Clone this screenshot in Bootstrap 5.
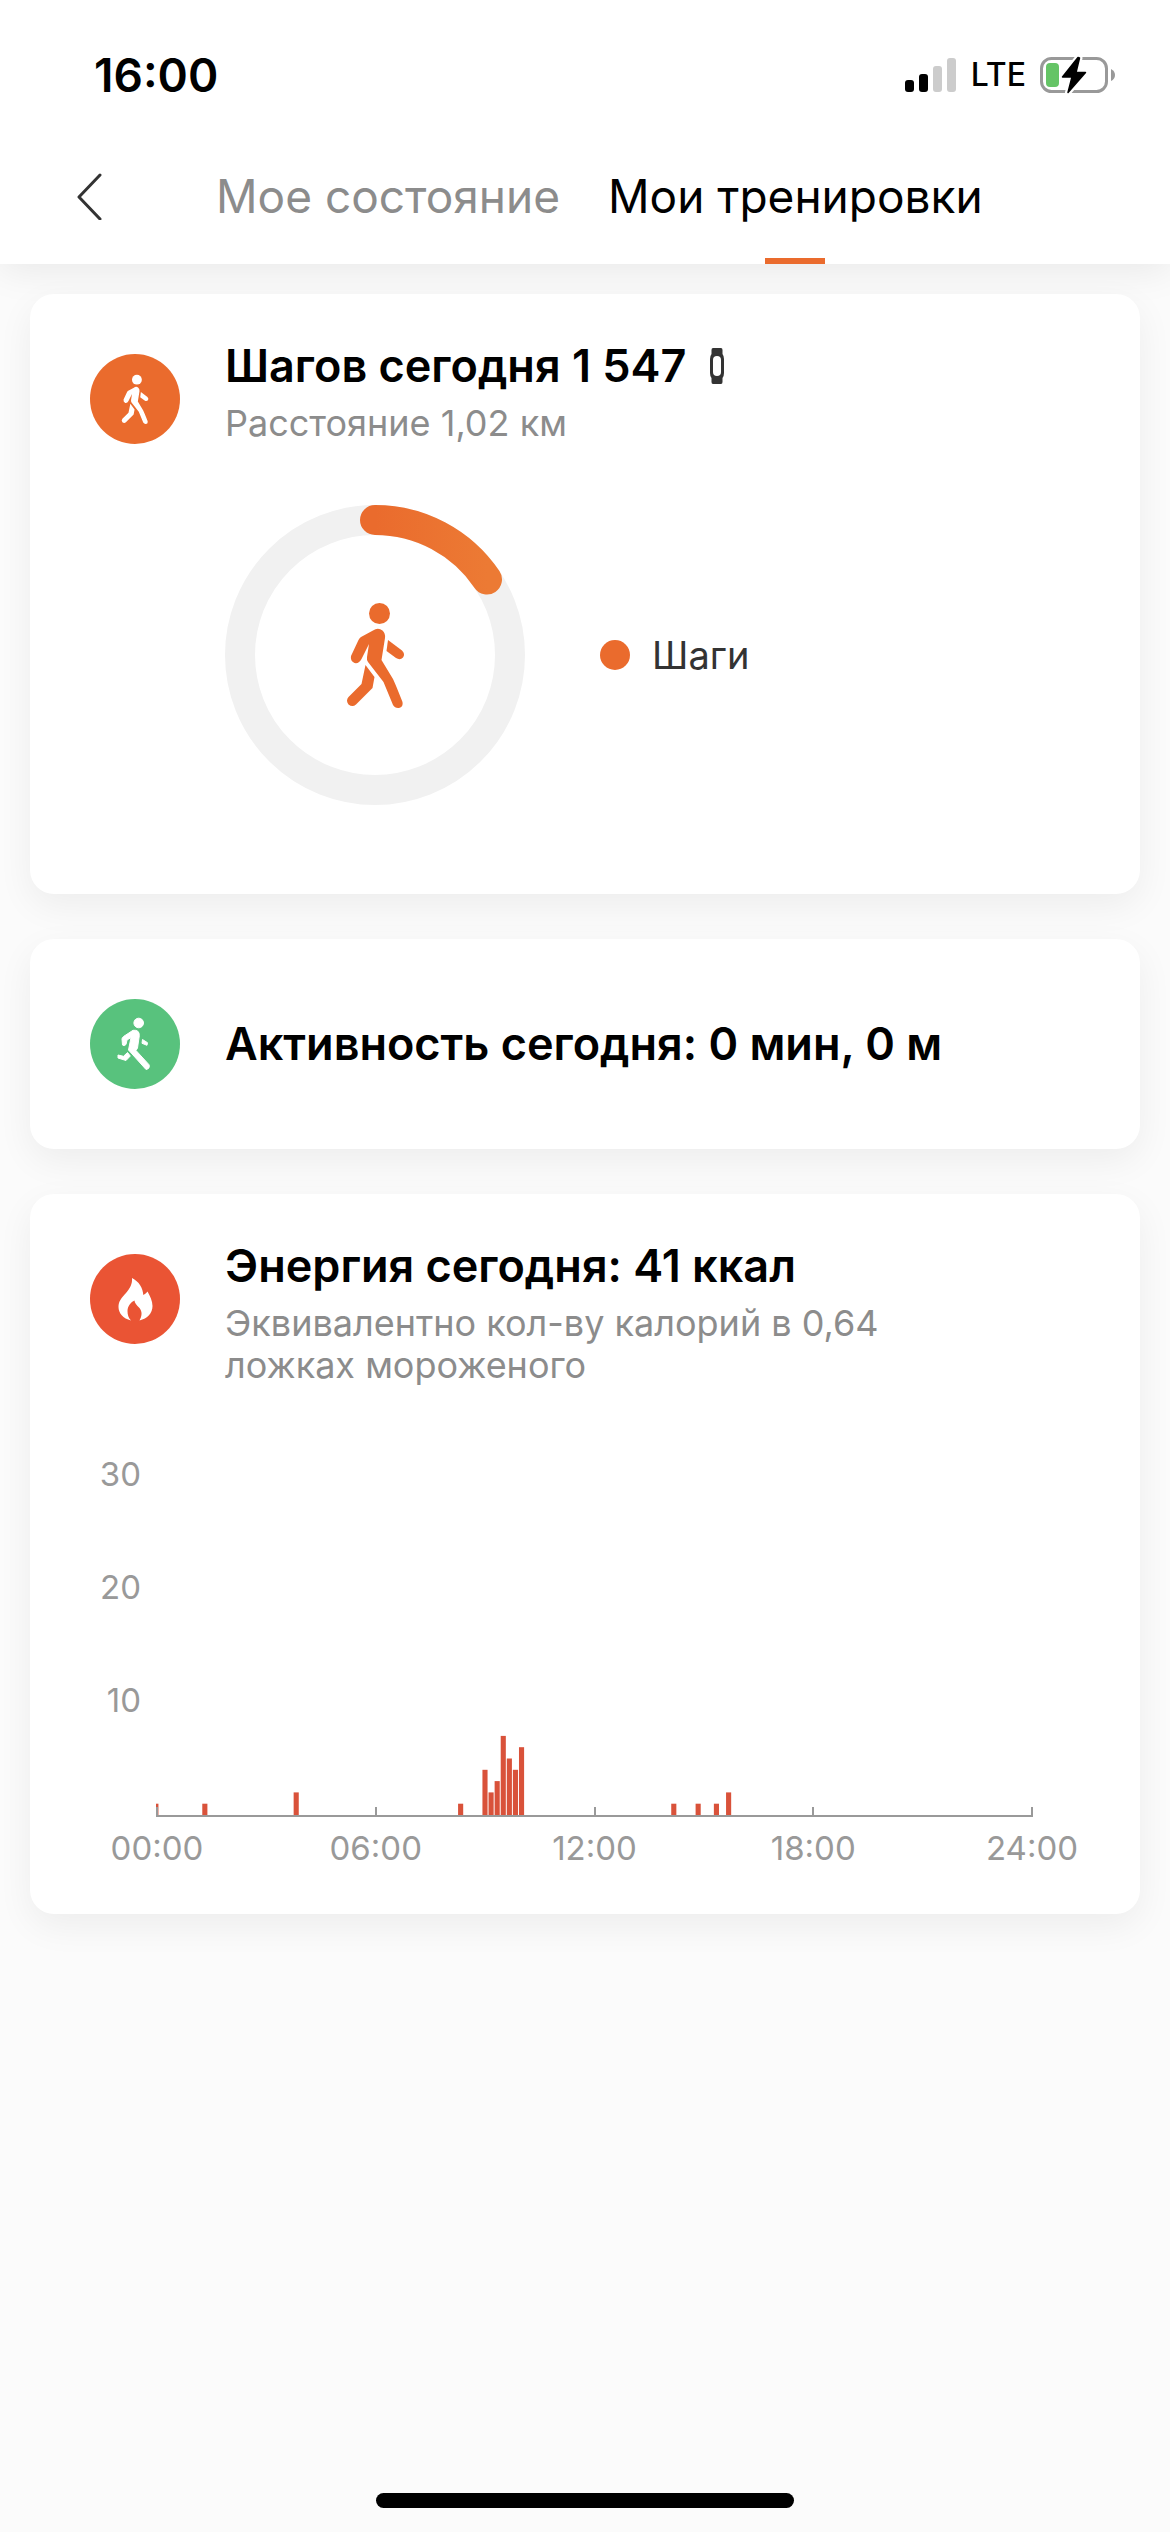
<!DOCTYPE html>
<html lang="ru">
<head>
<meta charset="utf-8">
<meta name="viewport" content="width=device-width, initial-scale=1">
<title>Мои тренировки</title>
<link href="https://cdn.jsdelivr.net/npm/bootstrap@5.3.0/dist/css/bootstrap.min.css" rel="stylesheet">
<style>
  :root { --accent: #ea6b2d; --muted: #8c8c8c; }
  body { font-family: Inter, "Noto Sans", sans-serif; background: #fbfbfb; color: #000; }
  .top-area { background: #fff; box-shadow: 0 6px 36px rgba(0,0,0,.08); }
  .status-bar { height: 150px; padding: 0 54px 0 94px; }
  .status-icons { gap: 14px; }
  .clock { font-size: 46px; font-weight: 600; line-height: 54px; }
  .net-type { font-size: 32px; font-weight: 500; line-height: 42px; }
  .nav-row { height: 114px; padding-left: 60px; }
  .back-btn { width: 60px; height: 60px; }
  .tabs-list { gap: 48px; margin-left: 96px; font-size: 46px; line-height: 60px; }
  .tab-link { height: 114px; padding-top: 16px; color: var(--muted); text-decoration: none; white-space: nowrap; }
  .tab-link.active { color: #000; }
  .tab-link.active::after { content: ""; width: 60px; height: 6px; margin-top: auto; background: var(--accent); }
  .feed { padding: 30px; gap: 45px; }
  .panel { border: 0; border-radius: 24px; box-shadow: 0 12px 36px rgba(0,0,0,.06); }
  .panel-head { padding: 45px 60px 0; gap: 45px; }
  .panel-single { padding: 60px; }
  .round-icon { width: 90px; height: 90px; }
  .head-offset { margin-top: 15px; }
  .panel-title { font-size: 45px; font-weight: 600; line-height: 54px; margin: 0; }
  .panel-sub { font-size: 36px; line-height: 42px; color: var(--muted); margin: 9px 0 0; max-width: 700px; }
  .steps-body { padding: 61px 60px 89px 195px; gap: 75px; }
  .ring { width: 300px; height: 300px; }
  .legend-dot { width: 30px; height: 30px; background: var(--accent); }
  .legend { gap: 22px; font-size: 38px; line-height: 48px; color: #333; }
  .chart { padding: 67px 107px 45px 60px; font-size: 33px; line-height: 42px; color: #999; }
  .y-scale { width: 51px; }
  .y-scale span { height: 113px; }
  .plot { flex: 1 1 0; min-width: 0; height: 364px; margin-left: 15px; padding-top: 23px; border-bottom: 2px solid #999; }
  .plot svg { height: 339px; }
  .ticks { height: 8px; margin-top: -8px; }
  .ticks i { width: 2px; background: #999; }
  .x-scale { margin: 10px 0 0 66px; }
  .x-scale span { width: 2px; }
  .home-bar { width: 418px; height: 15px; margin-bottom: 24px; }
</style>
</head>
<body>
<svg class="d-none" aria-hidden="true">
  <symbol id="walker" viewBox="0 0 110 140">
    <circle cx="59.500" cy="33.500" r="10.500"/>
    <path d="M41 57 L53 50.500 Q58 47 62.500 50.500 Q65.500 53 65 58 L61.500 80 L73 99 Q75 103 82.500 122 Q83.500 127 79 128 Q75 128.500 73 125 L63.500 102 L48 82 Q46.500 80 47 77 L49 64 L41.500 79 Q39 84 34.500 83 Q30 81 31 76 L38.500 60 Q39.500 58 41 57 Z"/>
    <path d="M68 60 L82 70.500 Q85.500 74 83 77.500 Q80 80.500 76 78 L66.500 71 Z"/>
    <path d="M45.500 85 L54.500 97 L52.500 108 L36 124.500 Q32.500 127.500 28.500 124.500 Q25.500 120.500 28.500 117 L41.500 104 Z"/>
  </symbol>
</svg>
<div class="min-vh-100 d-flex flex-column">
  <header class="top-area">
    <div class="status-bar d-flex align-items-center justify-content-between">
      <span class="clock">16:00</span>
      <div class="status-icons d-flex align-items-center">
        <svg width="52" height="36" viewBox="0 0 52 36" role="img" aria-label="Сигнал">
          <rect x="0" y="23" width="9" height="12" rx="3"/><rect x="14" y="17" width="9" height="18" rx="3"/>
          <rect x="28" y="9" width="9" height="26" rx="3" fill="#ccc"/><rect x="42" y="1" width="9" height="34" rx="3" fill="#ccc"/>
        </svg>
        <span class="net-type">LTE</span>
        <svg width="76" height="40" viewBox="0 0 76 40" role="img" aria-label="Батарея">
          <rect x="1.500" y="3.500" width="65" height="33" rx="10" fill="none" stroke="#999" stroke-width="3"/>
          <rect x="6" y="8" width="13" height="24" rx="4" fill="#65c466"/>
          <path d="M71 14 Q75 16 75 20 Q75 24 71 26 Z" fill="#999"/>
          <path d="M38 2.500 L22.500 22 H32 L28 37.500 L45.500 17.500 H36 L39.500 3 Z" stroke="#fff" stroke-width="6" stroke-linejoin="round"/>
          <path d="M38 2.500 L22.500 22 H32 L28 37.500 L45.500 17.500 H36 L39.500 3 Z" stroke="#000" stroke-width="1.500" stroke-linejoin="round"/>
        </svg>
      </div>
    </div>
    <nav class="nav-row d-flex">
      <button type="button" class="back-btn btn p-0 border-0 mt-3 d-flex align-items-center justify-content-center" aria-label="Назад">
        <svg width="28" height="48" viewBox="0 0 28 48" fill="none" stroke="#333" stroke-width="3" stroke-linecap="round" stroke-linejoin="round"><path d="M24 3 L3 25 L24 47"/></svg>
      </button>
      <div class="tabs-list d-flex">
        <a href="#" class="tab-link d-flex flex-column align-items-center">Мое состояние</a>
        <a href="#" class="tab-link active d-flex flex-column align-items-center" aria-current="page">Мои тренировки</a>
      </div>
    </nav>
  </header>

  <main class="feed d-flex flex-column">
    <section class="panel card">
      <div class="panel-head d-flex">
        <svg class="round-icon head-offset flex-shrink-0" viewBox="0 0 90 90"><circle cx="45" cy="45" r="45" fill="#ea6b2d"/><use href="#walker" x="19" y="10" width="51.600" height="65.600" fill="#fff"/></svg>
        <div>
          <h2 class="panel-title d-flex align-items-center">Шагов сегодня 1 547
            <svg class="ms-4" width="14" height="36" viewBox="0 0 14 36"><path d="M3 0 H11 Q12.500 0 12.500 2 V6 Q14 8 14 11 V25 Q14 28 12.500 30 V34 Q12.500 36 11 36 H3 Q1.500 36 1.500 34 V30 Q0 28 0 25 V11 Q0 8 1.500 6 V2 Q1.500 0 3 0 Z" fill="#333"/><rect x="3" y="8" width="8" height="20" rx="4" fill="#fff"/></svg>
          </h2>
          <p class="panel-sub">Расстояние 1,02 км</p>
        </div>
      </div>
      <div class="steps-body d-flex align-items-center">
        <svg class="ring flex-shrink-0" viewBox="0 0 300 300" role="img" aria-label="Шаги: 1547">
          <defs><linearGradient id="arcFill"><stop offset="0" stop-color="#ea6b2d"/><stop offset="1" stop-color="#ec7a34"/></linearGradient></defs>
          <circle cx="150" cy="150" r="135" fill="none" stroke="#f1f1f1" stroke-width="30"/>
          <path d="M150 15 A135 135 0 0 1 262 74.500" fill="none" stroke="url(#arcFill)" stroke-width="30" stroke-linecap="round"/>
          <use href="#walker" x="95" y="75" width="110" height="140" fill="#ea6b2d"/>
        </svg>
        <div class="legend d-flex align-items-center"><span class="legend-dot rounded-circle"></span>Шаги</div>
      </div>
    </section>

    <section class="panel card">
      <div class="panel-head panel-single d-flex align-items-center">
        <svg class="round-icon flex-shrink-0" viewBox="0 0 90 90"><circle cx="45" cy="45" r="45" fill="#58c27d"/>
          <g fill="#fff" stroke="#fff" stroke-width="1" stroke-linejoin="round"><circle cx="48.700" cy="24" r="4.800"/>
            <path d="M33.500 37.500 L43 31.300 Q49.500 30.500 49.300 36.700 L47.500 49 L46 51.500 L59 65.700 Q60.500 69.500 56 70.500 L38.500 51 L41 38.500 L37 41 L36 45.500 Q34 47.500 32.500 46 L32 40 Q32 38.500 33.500 37.500 Z"/>
            <path d="M52.500 40.500 L57.500 43.700 L57 46.300 L52 44.300 Z"/>
            <path d="M28 56 L33.500 57.300 L37.500 53.500 L40.300 57 L36 61.500 L28 59 Z"/></g></svg>
        <h2 class="panel-title">Активность сегодня: 0 мин, 0 м</h2>
      </div>
    </section>

    <section class="panel card">
      <div class="panel-head d-flex">
        <svg class="round-icon head-offset flex-shrink-0" viewBox="0 0 90 90"><circle cx="45" cy="45" r="45" fill="#ea5434"/>
          <path fill="#fff" d="M42 24 C49 27.500 53 34 53.300 41 C55 40 56.500 39 57.500 37.500 C60 42 62.500 47 62.500 52 C62.500 59 57.500 64.500 49.500 66.500 C52 62 52.500 58 49.500 54 C46.500 51 44.500 49 44.500 46.500 C41 48 37.500 52 37.500 57 C37.500 61 38.500 64 41 66.500 C33 64.500 28.500 59 28.500 53 C28.500 47 31.500 44 36 39 C40 34 42.500 30 42 24 Z"/></svg>
        <div>
          <h2 class="panel-title">Энергия сегодня: 41 ккал</h2>
          <p class="panel-sub">Эквивалентно кол-ву калорий в 0,64 ложках мороженого</p>
        </div>
      </div>
      <div class="chart">
        <div class="d-flex">
          <div class="y-scale d-flex flex-column text-end flex-shrink-0"><span>30</span><span>20</span><span>10</span></div>
          <div class="plot">
            <svg class="d-block w-100" viewBox="0 0 144 30" preserveAspectRatio="none" fill="#d9523a" role="img" aria-label="Энергия по времени">
              <rect x="0" y="29" width=".4" height="1"/><rect x="7.600" y="29" width=".84" height="1"/><rect x="22.600" y="28" width=".84" height="2"/><rect x="49.600" y="29" width=".84" height="1"/>
              <rect x="53.600" y="26" width=".84" height="4"/><rect x="54.600" y="28" width=".84" height="2"/><rect x="55.600" y="27" width=".84" height="3"/><rect x="56.600" y="23" width=".84" height="7"/><rect x="57.600" y="25" width=".84" height="5"/><rect x="58.600" y="26" width=".84" height="4"/><rect x="59.600" y="24" width=".84" height="6"/>
              <rect x="84.600" y="29" width=".84" height="1"/><rect x="88.600" y="29" width=".84" height="1"/><rect x="91.600" y="29" width=".84" height="1"/><rect x="93.600" y="28" width=".84" height="2"/>
            </svg>
            <div class="ticks d-flex justify-content-between"><i></i><i></i><i></i><i></i><i></i></div>
          </div>
        </div>
        <div class="x-scale d-flex justify-content-between">
          <span class="d-flex justify-content-center">00:00</span><span class="d-flex justify-content-center">06:00</span><span class="d-flex justify-content-center">12:00</span><span class="d-flex justify-content-center">18:00</span><span class="d-flex justify-content-center">24:00</span>
        </div>
      </div>
    </section>
  </main>
  <div class="home-bar bg-black rounded-pill mx-auto mt-auto"></div>
</div>
<script src="https://cdn.jsdelivr.net/npm/bootstrap@5.3.0/dist/js/bootstrap.bundle.min.js"></script>
</body>
</html>
